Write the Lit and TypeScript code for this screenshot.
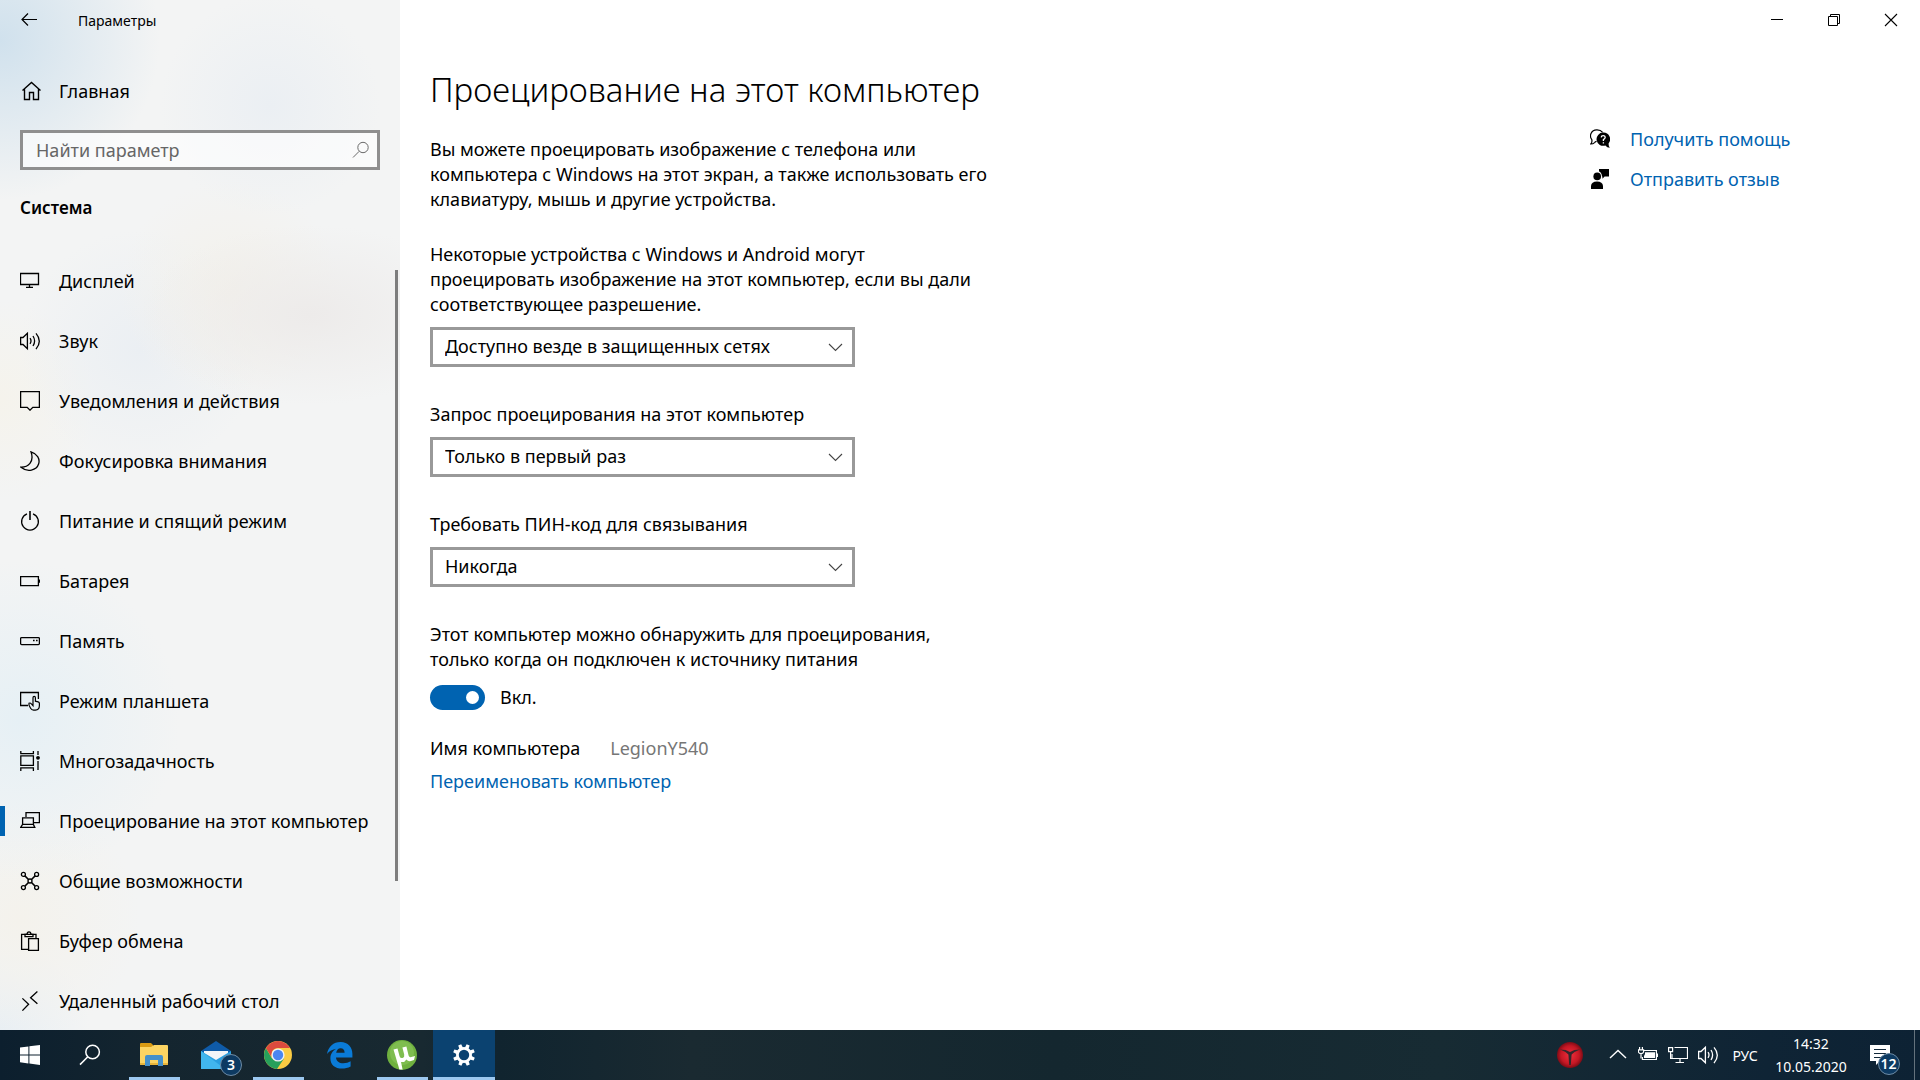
import { LitElement, html, css, svg, nothing, type TemplateResult } from "lit";
import { customElement, property, state } from "lit/decorators.js";
import { classMap } from "lit/directives/class-map.js";

const line = (body: unknown, size = 20) => html`
  <svg width=${size} height=${size} viewBox="0 0 ${size} ${size}" fill="none" stroke="currentColor" aria-hidden="true">
    ${body}
  </svg>
`;

const icons = {
  back: line(svg`<path d="M18 9.5H3M9 3.5L3 9.5L9 15.5" stroke-width="1.2"/>`),
  home: line(svg`<path d="M1.5 9.5L10.5 1.5L19.5 9.5M3.5 8V18.5H8.5V11.5H12.5V18.5H17.5V8" stroke-width="1.4"/>`),
  search: line(svg`<circle cx="12" cy="7.5" r="5.2"/><path d="M8.2 11.3L2 17.5"/>`),
  display: line(svg`<path d="M.5 2.5H18.5V13.5H.5ZM9.5 13.5V16M6 16.3H13" stroke-width="1.3"/>`),
  sound: line(svg`<path d="M.6 6.5H3L7.4 2.2V17.8L3 13.5H.6ZM10 7.2Q12 10 10 12.8M13 5Q16.2 10 13 15M16 2.4Q22.6 10 16 18.2" stroke-width="1.3"/>`),
  notify: line(svg`<path d="M.6 .7H19.4V16.4H12.8L10 19.2L7.2 16.4H.6Z" stroke-width="1.3"/>`),
  moon: line(svg`<path d="M11 .8C17 2.6 20.3 8 18.6 13C16.6 19.4 7.4 21.6 1 16.2C8 16.4 14.6 11 11 .8Z" stroke-width="1.3"/>`),
  power: line(svg`<path d="M7 2.8A8.4 8.4 0 1 0 13 2.8" stroke-width="1.3"/><path d="M10 0V9" stroke-width="1.6"/>`),
  battery: line(svg`<path d="M.6 5.6H18.4V14.6H.6Z" stroke-width="1.3"/><path d="M19.4 8.5V11.7" stroke-width="1.3"/>`),
  storage: line(svg`<rect x=".6" y="6.6" width="18.8" height="7" rx="1" stroke-width="1.3"/><path d="M13 9.5H14.6M16 9.5H17.6" stroke-width="1.3"/>`),
  tablet: line(svg`
    <path d="M8 14.5H.6V1.5H18.4V8" stroke-width="1.3"/>
    <path d="M13 13V6.8Q13 5.4 14.2 5.4Q15.4 5.4 15.4 6.8V10.2L18.2 10.8Q19.4 11.1 19.4 12.6V14.6Q19.4 19 15.4 19.2H13.6Q11.6 19 10.6 17.2L9 14.2V12.2Q10.4 11.6 11.4 12.8L13 14.6Z" stroke-width="1.2"/>`),
  tasks: line(svg`
    <path d="M.8 0V2.6H13.4V0M.8 20V16.8H13.4V20M.8 4.8H13.4V14.4H.8Z" stroke-width="1.3"/>
    <path d="M18 0V4M18 10V19" stroke-width="1.3"/><circle cx="18" cy="6.8" r="1.9" fill="currentColor" stroke="none"/>`),
  project: line(svg`<path d="M6 6V1.6H19.4V11.6H14M2.6 13.4V6.8H13.4V13.4M2.6 13.4L.6 16.4H14.8L13.4 13.4Z" stroke-width="1.3"/>`),
  shared: line(svg`
    <circle cx="3.4" cy="3.4" r="2" stroke-width="1.3"/><circle cx="16.6" cy="3.4" r="2" stroke-width="1.3"/>
    <circle cx="3.4" cy="16.6" r="2" stroke-width="1.3"/><circle cx="16.6" cy="16.6" r="2" stroke-width="1.3"/>
    <circle cx="10" cy="10" r="2" stroke-width="1.3"/><path d="M4.9 4.9L8.5 8.5M15.1 4.9L11.5 8.5M4.9 15.1L8.5 11.5M15.1 15.1L11.5 11.5" stroke-width="1.5"/>`),
  clipboard: line(svg`
    <path d="M8 18.4H1.6V3.4H16V7" stroke-width="1.3"/><path d="M5 5.6V3.4H7Q7.2 .8 9 .8T11 3.4H13V5.6Z" stroke-width="1.3"/>
    <path d="M8.6 7.6H18.4V19.4H8.6Z" stroke-width="1.3"/>`),
  remote: line(svg`<path d="M2.4 7.4L8.6 13.2L2.4 19.6M17.4 .6L10.6 6.8L17.4 12.8" stroke-width="1.3"/>`),
  chevron: line(svg`<path d="M3 7L9.5 13.5L16 7" stroke-width="1.1"/>`),
  minimize: line(svg`<path d="M4 9.5H16"/>`),
  restore: line(svg`<path d="M4.5 6.5H13.5V15.5H4.5ZM6.5 6V4.5H15.5V13.5H14"/>`),
  close: line(svg`<path d="M4 4L16 16M16 4L4 16" stroke-width="1.1"/>`),
  help: line(svg`
    <path d="M6.6 12.4Q5.2 12.6 4.6 13.6Q3 15 .8 15Q2.4 13.4 1.8 10.6A6 6 0 0 1 6.6 .9Q10.6 .7 12.6 3.4" stroke-width="1.2"/>
    <path d="M13.2 3.6A6.6 6.6 0 1 0 15.4 16.4Q17 18.8 19.8 18.8Q18.4 17.4 18.6 14.4A6.6 6.6 0 0 0 13.2 3.6Z" fill="currentColor" stroke="none"/>
    <path d="M11.2 8.4Q11.4 6.6 13.2 6.6T15.2 8.2Q15.2 9.4 13.4 10.6V12M13.4 13.2V14.6" stroke="#fff" stroke-width="1.3"/>`),
  feedback: line(svg`
    <path d="M9 0H19V7.6H14.6L12.4 9.8V7.6H12Q11.6 3.4 9 2.6Z" fill="currentColor" stroke="none"/>
    <circle cx="7.2" cy="7.4" r="3.8" fill="currentColor" stroke="none"/>
    <path d="M1 20V17Q1.4 12.4 7 12.4T13 17V20Z" fill="currentColor" stroke="none"/>`),
  trayUp: line(svg`<path d="M2 13L10 5.5L18 13" stroke-width="1.4"/>`),
  trayPower: line(svg`
    <path d="M5.4 5.5H18.4V14.5H4.4V12" stroke-width="1.2"/><path d="M7 7.2H17V13H6V11L7 9Z" fill="currentColor" stroke="none"/>
    <path d="M19.4 8.5V12" stroke-width="1.4"/><path d="M1.6 2V4.4M4.4 2V4.4M.4 4.8H5.6V7Q5 8.6 3 8.6T.4 7ZM3 8.6V13.4" stroke-width="1.2"/>`),
  trayNet: line(svg`<path d="M6.5 2.5H19.5V13.5H4V9M12 13.5V17M7.5 17.5H16" stroke-width="1.2"/><path d="M.6 2.6H4.6V6.6H.6ZM2.6 6.6V13.5H5" stroke-width="1.2"/>`),
};

const startLogo = html`<svg width="20" height="20" viewBox="0 0 20 20" fill="#fff" aria-hidden="true">
  <path d="M0 2.6L8.4 1.5V9.4H0ZM9.4 1.3L20 0V9.4H9.4ZM0 10.4H8.4V18.4L0 17.3ZM9.4 10.4H20V20L9.4 18.6Z"/></svg>`;

const explorerLogo = html`<svg width="28" height="24" viewBox="0 0 28 24" aria-hidden="true">
  <path d="M0 1Q0 0 1 0H11L13 2V6H0Z" fill="#d99a12"/><path d="M0 4H11L14 2H27Q28 2 28 3V21Q28 22 27 22H1Q0 22 0 21Z" fill="#fcd462"/>
  <path d="M0 20H28V21Q28 22 27 22H1Q0 22 0 21Z" fill="#e9b53a"/>
  <path d="M5 23V14Q5 12 7 12H21Q23 12 23 14V23H18V17H10V23Z" fill="#4590ca"/></svg>`;

const mailLogo = html`<svg width="30" height="28" viewBox="0 0 30 28" aria-hidden="true">
  <path d="M0 10L15 0L30 10V20H0Z" fill="#0f5ba8"/><path d="M3 10H27V20H3Z" fill="#f3f5f8"/>
  <path d="M0 10L15 19L30 10V28H0Z" fill="#2a9fe0"/><path d="M0 10L24 28H0Z" fill="#41b6ee"/></svg>`;

const chromeLogo = html`<svg width="28" height="28" viewBox="0 0 28 28" aria-hidden="true">
  <circle cx="14" cy="14" r="14" fill="#fbcb43"/>
  <path d="M1.9 7A14 14 0 0 0 13 28L20 17.5L14 14L8 17.5Z" fill="#27a05b"/>
  <path d="M1.9 7A14 14 0 0 1 26.1 7H14A7 7 0 0 0 8 10.5L7.4 16Z" fill="#dd4b3e"/>
  <circle cx="14" cy="14" r="6.6" fill="#f1f1f1"/><circle cx="14" cy="14" r="5.2" fill="#4a86f0"/></svg>`;

const edgeLogo = html`<svg width="26" height="27" viewBox="0 0 26 27" aria-hidden="true">
  <path d="M0 12C1.4 4.6 6.4 0 13.6 0C21 0 25.4 5.2 25.4 12V15.4H9C9.2 19.2 12.4 21.2 16.2 21.2C19.2 21.2 21.6 20.4 23.6 19.2V24.6C21 26 18 26.6 15 26.6C8 26.6 3.4 22.6 3.4 16.4C3.4 12.2 5.6 8.6 9.4 6.8C5.4 7.4 2.2 9 0 12ZM9.2 10.8H17.6C17.6 7.8 16.2 6.2 13.6 6.2C11.2 6.2 9.6 8 9.2 10.8Z" fill="#0a7bd8"/></svg>`;

const torrentLogo = html`<svg width="30" height="30" viewBox="0 0 30 30" aria-hidden="true">
  <circle cx="15" cy="15" r="15" fill="#6fb03f"/><circle cx="15" cy="13" r="12" fill="#7fbd50"/>
  <path d="M6.5 9.5L10.5 8.5L12.6 16.2Q13.4 18.6 15.6 18Q17.8 17.2 17.2 14.6L15.4 7.6L19.4 6.6L21.6 15.6Q22.2 17.6 24.4 17L28 16L27 20Q21.6 22.6 19.4 19.4Q17.6 22.6 14 22L15.6 29.4L12.4 29.6Z" fill="#fff"/></svg>`;

const gearLogo = html`<svg width="22" height="22" viewBox="-11 -11 22 22" aria-hidden="true">
  <circle r="6.6" fill="none" stroke="#fff" stroke-width="2.8"/>
  ${[0, 45, 90, 135, 180, 225, 270, 315].map(
    (a) => svg`<path d="M-1.9 -7L-1.6 -11H1.6L1.9 -7Z" fill="#fff" transform="rotate(${a + 22})"/>`,
  )}</svg>`;

const redLogo = html`<svg width="26" height="26" viewBox="0 0 26 26" aria-hidden="true">
  <defs><radialGradient id="red-ball"><stop offset="0" stop-color="#f0303c"/><stop offset=".7" stop-color="#c41724"/><stop offset="1" stop-color="#7d0c16"/></radialGradient></defs>
  <circle cx="13" cy="13" r="13" fill="url(#red-ball)"/>
  <path d="M3 7.6Q9 7.6 13 10Q17 7.6 23 7.6Q17.4 9.6 14.6 12.6L13.8 23H12.2L11.4 12.6Q8.6 9.6 3 7.6Z" fill="#33272c"/></svg>`;

const noteLogo = html`<svg width="20" height="20" viewBox="0 0 20 20" aria-hidden="true">
  <path d="M0 0H20V16H10L6 20V16H0Z" fill="#fff"/><path d="M4 4.5H16M4 8.5H16M4 12.5H12" stroke="#12283a" stroke-width="1.2"/></svg>`;

interface NavItem {
  label: string;
  icon: TemplateResult;
}

const NAV: NavItem[] = [
  { label: "Дисплей", icon: icons.display },
  { label: "Звук", icon: icons.sound },
  { label: "Уведомления и действия", icon: icons.notify },
  { label: "Фокусировка внимания", icon: icons.moon },
  { label: "Питание и спящий режим", icon: icons.power },
  { label: "Батарея", icon: icons.battery },
  { label: "Память", icon: icons.storage },
  { label: "Режим планшета", icon: icons.tablet },
  { label: "Многозадачность", icon: icons.tasks },
  { label: "Проецирование на этот компьютер", icon: icons.project },
  { label: "Общие возможности", icon: icons.shared },
  { label: "Буфер обмена", icon: icons.clipboard },
  { label: "Удаленный рабочий стол", icon: icons.remote },
];

const resets = css`
  *, *::before, *::after { box-sizing: border-box; }
  button { border: 0; padding: 0; background: none; color: inherit; font: inherit; }
  a { color: inherit; text-decoration: none; }
  svg { display: block; flex: none; }
`;

@customElement("settings-nav")
class SettingsNav extends LitElement {
  @state() private current = 9;

  static styles = [
    resets,
    css`
      :host {
        display: flex;
        flex-direction: column;
        min-height: 0;
        background:
          radial-gradient(circle at 0 40px, #d0e1ed 0, #d0e1ed00 160px),
          radial-gradient(ellipse 170px 90px at 310px 315px, #edebea 0, #edebea00 100%),
          radial-gradient(circle at 230px 290px, #f3f1eb 0, #f3f1eb00 110px),
          radial-gradient(circle at 140px 350px, #ebeff3 0, #ebeff300 120px),
          radial-gradient(circle at 270px 105px, #ebeff3 0, #ebeff300 110px),
          radial-gradient(circle at 0 400px, #f5f3ec 0, #f5f3ec00 100px),
          radial-gradient(circle at 20px 720px, #e6f0f5 0, #e6f0f500 160px),
          radial-gradient(circle at 20px 920px, #f4f2ec 0, #f4f2ec00 120px),
          radial-gradient(circle at 0 1030px, #e8eff4 0, #e8eff400 90px),
          #f3f4f4;
      }
      .title { display: flex; align-items: center; height: 40px; padding-left: 19px; gap: 39px; font-size: 14px; }
      .home { display: flex; align-items: center; gap: 18px; height: 60px; margin-top: 21px; padding-left: 21px; }
      .search { display: flex; align-items: center; height: 40px; margin: 9px 20px 0; border: 3px solid #8f8f8f; background: #ffffff99; color: #6a6a6a; padding-right: 6px; }
      .search input { flex: 1; min-width: 0; border: 0; outline: 0; background: none; font: inherit; color: #000; padding: 0 13px; }
      .search input::placeholder { color: #666; opacity: 1; }
      h2 { margin: 25px 20px 0; font-size: 17px; font-weight: 600; line-height: 25px; }
      .body { display: flex; flex: 1; min-height: 0; margin-top: 31px; }
      ul { flex: 1; min-height: 0; margin: 0; padding: 0; list-style: none; overflow: hidden; }
      .item { display: flex; align-items: center; gap: 19px; height: 60px; padding-left: 20px; white-space: nowrap; }
      .item.on::before { content: ""; width: 5px; height: 30px; margin: 0 -4px 0 -20px; background: #0063b1; }
      .thumb { flex: none; width: 3px; height: 611px; margin: 19px 2px 0 0; background: #7d7d7d; }
    `,
  ];

  render() {
    return html`
      <div class="title"><button aria-label="Назад">${icons.back}</button><span>Параметры</span></div>
      <a class="home" href="#home">${icons.home}<span>Главная</span></a>
      <label class="search"><input type="text" placeholder="Найти параметр" aria-label="Найти параметр" />${icons.search}</label>
      <h2>Система</h2>
      <div class="body">
        <ul>
          ${NAV.map(
            (n, i) => html`<li>
              <a
                class=${classMap({ item: true, on: i === this.current })}
                href="#${i}"
                aria-current=${i === this.current ? "page" : nothing}
                @click=${() => (this.current = i)}
                >${n.icon}<span>${n.label}</span></a
              >
            </li>`,
          )}
        </ul>
        <div class="thumb"></div>
      </div>
    `;
  }
}

@customElement("settings-page")
class SettingsPage extends LitElement {
  static styles = [
    resets,
    css`
      :host { display: flex; flex-direction: column; min-width: 0; min-height: 0; background: #fff; }
      .controls { display: flex; justify-content: flex-end; height: 40px; padding-right: 1px; }
      .controls button { display: grid; place-items: center; width: 57px; }
      .content { display: flex; justify-content: space-between; padding-left: 30px; }
      .main { width: 570px; }
      h1 { margin: 26px 0 0; font-size: 33px; line-height: 48px; font-weight: 300; white-space: nowrap; }
      p { margin: 23px 0 0; line-height: 25px; }
      .field { display: flex; flex-direction: column; margin-top: 30px; line-height: 25px; }
      .field + .field { margin-top: 35px; }
      .pick { display: grid; align-items: center; width: 425px; height: 40px; margin-top: 10px; }
      .pick select { grid-area: 1 / 1; width: 100%; height: 100%; appearance: none; border: 3px solid #999; border-radius: 0; background: #fff; color: #000; font: inherit; padding: 0 40px 2px 12px; }
      .pick svg { grid-area: 1 / 1; justify-self: end; margin-right: 9px; color: #444; pointer-events: none; }
      .switch { display: flex; align-items: center; gap: 15px; height: 25px; margin-top: 13px; }
      .switch input { appearance: none; display: flex; align-items: center; justify-content: flex-end; width: 55px; height: 25px; margin: 0; padding: 0 6px; border-radius: 13px; background: #0063b1; }
      .switch input::before { content: ""; width: 13px; height: 13px; border-radius: 50%; background: #fff; }
      .switch input:not(:checked) { justify-content: flex-start; background: #999; }
      .name { display: flex; gap: 30px; margin-top: 26px; line-height: 25px; }
      .value { color: #767676; }
      .link { color: #0063b1; }
      .rename { display: inline-block; margin-top: 8px; line-height: 25px; }
      .help { width: 330px; margin-top: 79px; }
      .help a { display: flex; align-items: center; gap: 20px; height: 40px; color: #0063b1; }
      .help svg { color: #000; }
    `,
  ];

  private select(id: string, label: unknown, options: string[]) {
    return html`<div class="field">
      <label for=${id}>${label}</label>
      <div class="pick">
        <select id=${id}>
          ${options.map((o) => html`<option>${o}</option>`)}
        </select>
        ${icons.chevron}
      </div>
    </div>`;
  }

  render() {
    return html`
      <div class="controls">
        <button aria-label="Свернуть">${icons.minimize}</button>
        <button aria-label="Свернуть в окно">${icons.restore}</button>
        <button aria-label="Закрыть">${icons.close}</button>
      </div>
      <div class="content">
        <main class="main">
          <h1>Проецирование на этот компьютер</h1>
          <p>
            Вы можете проецировать изображение с телефона или<br />компьютера с Windows на этот экран, а также использовать
            его<br />клавиатуру, мышь и другие устройства.
          </p>
          ${this.select(
            "access",
            html`Некоторые устройства с Windows и Android могут<br />проецировать изображение на этот компьютер, если вы
              дали<br />соответствующее разрешение.`,
            ["Доступно везде в защищенных сетях"],
          )}
          ${this.select("ask", "Запрос проецирования на этот компьютер", ["Только в первый раз"])}
          ${this.select("pin", "Требовать ПИН-код для связывания", ["Никогда"])}
          <div class="field">
            <label for="plugged">Этот компьютер можно обнаружить для проецирования,<br />только когда он подключен к источнику питания</label>
            <div class="switch"><input id="plugged" type="checkbox" role="switch" checked /><span>Вкл.</span></div>
          </div>
          <div class="name"><span>Имя компьютера</span><span class="value">LegionY540</span></div>
          <a class="link rename" href="#rename">Переименовать компьютер</a>
        </main>
        <nav class="help">
          <a href="#help">${icons.help}<span>Получить помощь</span></a>
          <a href="#feedback">${icons.feedback}<span>Отправить отзыв</span></a>
        </nav>
      </div>
    `;
  }
}

@customElement("task-button")
class TaskButton extends LitElement {
  @property() label = "";
  @property({ type: Boolean }) running = false;
  @property({ type: Boolean }) active = false;

  static styles = [
    resets,
    css`
      :host { display: block; width: 62px; height: 50px; }
      :host([narrow]) { width: 60px; }
      button { position: relative; display: grid; place-items: center; width: 100%; height: 100%; color: #fff; }
      .running::after { content: ""; position: absolute; inset: auto 5px 0 6px; height: 3px; background: #9cc8f0; }
      .active { background: #0b4270; }
      .active::after { left: 0; right: 0; }
    `,
  ];

  render() {
    return html`<button aria-label=${this.label} class=${classMap({ running: this.running, active: this.active })}><slot></slot></button>`;
  }
}

@customElement("task-bar")
class TaskBar extends LitElement {
  static styles = [
    resets,
    css`
      :host { display: flex; height: 50px; color: #fff; font-size: 14px; background: linear-gradient(90deg, #0c1f2e 0, #14252f 8%, #182931 22%, #10242f 26%, #1a2a31 36%, #14272f 55%, #172b33 75%, #0f2435 92%, #0d2234 100%); }
      .apps { display: flex; flex: 1; }
      .search { margin-right: 3px; }
      .tray { display: flex; align-items: stretch; }
      .tray button { display: grid; place-items: center; width: 30px; }
      .tray .red { margin-right: 18px; }
      .tray .lang { width: 44px; }
      .tray .clock { width: 88px; align-content: center; line-height: 23px; }
      .tray .notes { width: 59px; padding-right: 10px; }
      .tray .desktop { width: 6px; border-left: 1px solid #64727c; }
      .stack { position: relative; display: block; }
      .badge { position: absolute; display: grid; place-items: center; width: 22px; height: 22px; border: 1px solid #6d8ba5; border-radius: 50%; background: #0d3a62; color: #fff; font-size: 14px; line-height: 20px; font-weight: 600; }
      .mail { left: 19px; top: 13px; }
      .count { left: 8px; top: 8px; }
    `,
  ];

  render() {
    return html`
      <div class="apps">
        <task-button narrow label="Пуск">${startLogo}</task-button>
        <task-button narrow class="search" label="Поиск">
          <svg width="22" height="22" viewBox="0 0 22 22" fill="none" stroke="#fff" stroke-width="1.5" aria-hidden="true">
            <circle cx="13.6" cy="8" r="6.8" /><path d="M8.8 12.8L1 20.6" />
          </svg>
        </task-button>
        <task-button running label="Проводник">${explorerLogo}</task-button>
        <task-button label="Почта"><span class="stack">${mailLogo}<span class="badge mail">3</span></span></task-button>
        <task-button running label="Chrome">${chromeLogo}</task-button>
        <task-button label="Edge">${edgeLogo}</task-button>
        <task-button running label="Torrent">${torrentLogo}</task-button>
        <task-button running active label="Параметры">${gearLogo}</task-button>
      </div>
      <div class="tray">
        <button class="red" aria-label="Приложение">${redLogo}</button>
        <button aria-label="Скрытые значки">${icons.trayUp}</button>
        <button aria-label="Питание">${icons.trayPower}</button>
        <button aria-label="Сеть">${icons.trayNet}</button>
        <button aria-label="Громкость">${icons.sound}</button>
        <button class="lang">РУС</button>
        <button class="clock"><span>14:32</span><span>10.05.2020</span></button>
        <button class="notes" aria-label="Уведомления"><span class="stack">${noteLogo}<span class="badge count">12</span></span></button>
        <button class="desktop" aria-label="Рабочий стол"></button>
      </div>
    `;
  }
}

@customElement("app-root")
class AppRoot extends LitElement {
  static styles = css`
    :host {
      display: grid;
      grid-template: minmax(0, 1fr) auto / 400px minmax(0, 1fr);
      height: 100vh;
      overflow: hidden;
      color: #000;
      font: 18px/25px "Noto Sans", "Open Sans", sans-serif;
    }
    task-bar { grid-column: 1 / -1; }
  `;

  render() {
    return html`<settings-nav></settings-nav><settings-page></settings-page><task-bar></task-bar>`;
  }
}
